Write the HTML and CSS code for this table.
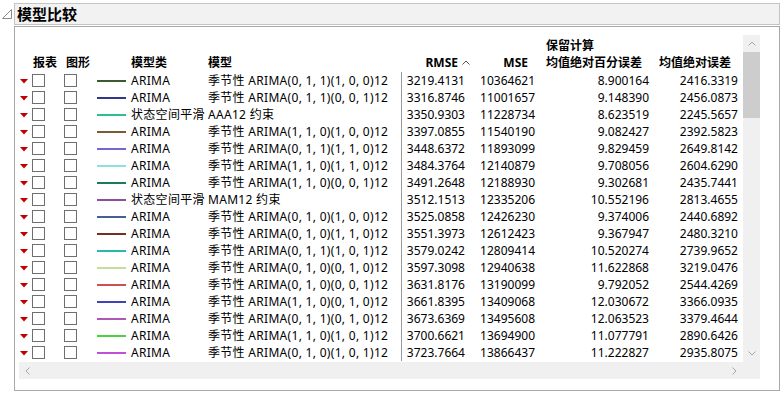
FILE: index.html
```html
<!DOCTYPE html>
<html lang="zh">
<head>
<meta charset="utf-8">
<link rel="stylesheet" href="styles.css">
</head>
<body>
<div class="outline">
  <div class="head">
    <span class="disc"><svg width="11" height="11" viewBox="0 0 11 11"><polygon points="9.5,0.5 9.5,9.5 0.5,9.5" fill="none" stroke="#8a8a8a" stroke-width="1"/></svg></span>
    <div class="titlebar">模型比较</div>
  </div>
  <div class="box">
    <div class="viewport">
      <div class="content">
        <table class="grid">
          <colgroup>
            <col class="w1"><col class="w2"><col class="w3"><col class="w4"><col class="w5"><col class="w6"><col class="w7"><col class="w8">
          </colgroup>
          <thead>
            <tr>
              <th class="h1">报表</th>
              <th class="h2">图形</th>
              <th class="h3">模型类</th>
              <th class="h4">模型</th>
              <th class="hn">RMSE<span class="sort"><svg width="8" height="5" viewBox="0 0 8 5"><polyline points="0.5,4.5 4,1 7.5,4.5" fill="none" stroke="#555" stroke-width="1"/></svg></span></th>
              <th class="hn">MSE<span class="sort"></span></th>
              <th class="hn"><span class="two">保留计算<br>均值绝对百分误差</span><span class="sort"></span></th>
              <th class="hn">均值绝对误差<span class="sort"></span></th>
            </tr>
          </thead>
          <tbody id="rows"></tbody>
        </table>
      </div>
      <div class="vbar">
        <div class="arr"><svg width="8" height="5" viewBox="0 0 8 5"><polyline points="0.5,4.5 4,1 7.5,4.5" fill="none" stroke="#a6a6a6" stroke-width="1"/></svg></div>
        <div class="thumb"></div>
        <div class="track"></div>
        <div class="arr"><svg width="8" height="5" viewBox="0 0 8 5"><polyline points="0.5,0.5 4,4 7.5,0.5" fill="none" stroke="#a6a6a6" stroke-width="1"/></svg></div>
      </div>
      <div class="hbar">
        <div class="arr"><svg width="5" height="8" viewBox="0 0 5 8"><polyline points="4.5,0.5 1,4 4.5,7.5" fill="none" stroke="#a6a6a6" stroke-width="1"/></svg></div>
        <div class="track"></div>
        <div class="arr"><svg width="5" height="8" viewBox="0 0 5 8"><polyline points="0.5,0.5 4,4 0.5,7.5" fill="none" stroke="#a6a6a6" stroke-width="1"/></svg></div>
        <div class="corner"></div>
      </div>
    </div>
  </div>
</div>
<script src="app.js"></script>
</body>
</html>
```
FILE: app.js
```js
var data = [
  ["#3c5a2e","ARIMA","季节性 ARIMA(0, 1, 1)(1, 0, 0)12","3219.4131","10364621","8.900164","2416.3319"],
  ["#2c3a8c","ARIMA","季节性 ARIMA(0, 1, 1)(0, 0, 1)12","3316.8746","11001657","9.148390","2456.0873"],
  ["#2fbf8e","状态空间平滑","AAA12 约束","3350.9303","11228734","8.623519","2245.5657"],
  ["#7b5b34","ARIMA","季节性 ARIMA(1, 1, 0)(1, 0, 0)12","3397.0855","11540190","9.082427","2392.5823"],
  ["#7468d0","ARIMA","季节性 ARIMA(0, 1, 1)(1, 1, 0)12","3448.6372","11893099","9.829459","2649.8142"],
  ["#8fe0e0","ARIMA","季节性 ARIMA(1, 1, 0)(1, 1, 0)12","3484.3764","12140879","9.708056","2604.6290"],
  ["#1e7a5e","ARIMA","季节性 ARIMA(1, 1, 0)(0, 0, 1)12","3491.2648","12188930","9.302681","2435.7441"],
  ["#8a4e9c","状态空间平滑","MAM12 约束","3512.1513","12335206","10.552196","2813.4655"],
  ["#465f95","ARIMA","季节性 ARIMA(0, 1, 0)(1, 0, 0)12","3525.0858","12426230","9.374006","2440.6892"],
  ["#6e3420","ARIMA","季节性 ARIMA(0, 1, 0)(1, 1, 0)12","3551.3973","12612423","9.367947","2480.3210"],
  ["#2ab8a8","ARIMA","季节性 ARIMA(0, 1, 1)(1, 0, 1)12","3579.0242","12809414","10.520274","2739.9652"],
  ["#c8dc9c","ARIMA","季节性 ARIMA(0, 1, 0)(0, 1, 0)12","3597.3098","12940638","11.622868","3219.0476"],
  ["#d05050","ARIMA","季节性 ARIMA(0, 1, 0)(0, 0, 1)12","3631.8176","13190099","9.792052","2544.4269"],
  ["#3c46b4","ARIMA","季节性 ARIMA(1, 1, 0)(0, 1, 0)12","3661.8395","13409068","12.030672","3366.0935"],
  ["#b056b4","ARIMA","季节性 ARIMA(0, 1, 1)(0, 1, 0)12","3673.6369","13495608","12.063523","3379.4644"],
  ["#50d040","ARIMA","季节性 ARIMA(1, 1, 0)(1, 0, 1)12","3700.6621","13694900","11.077791","2890.6426"],
  ["#c050dc","ARIMA","季节性 ARIMA(0, 1, 0)(1, 0, 1)12","3723.7664","13866437","11.222827","2935.8075"]
];
var tri = '<svg class="tri" width="8" height="5" viewBox="0 0 8 5"><polygon points="0,0 8,0 4,4.5" fill="#c00000"/></svg>';
var html = "";
data.forEach(function (r) {
  html += '<tr>' +
    '<td class="c1"><span class="cellflex">' + tri + '<span class="cb"></span></span></td>' +
    '<td class="c2"><span class="cellflex"><span class="cb"></span></span></td>' +
    '<td class="c3"><span class="cellflex"><span class="sw" style="background:' + r[0] + '"></span><span class="txt">' + r[1] + '</span></span></td>' +
    '<td class="c4">' + r[2] + '</td>' +
    '<td class="num sep">' + r[3] + '</td>' +
    '<td class="num">' + r[4] + '</td>' +
    '<td class="num">' + r[5] + '</td>' +
    '<td class="num">' + r[6] + '</td>' +
    '</tr>';
});
document.getElementById("rows").innerHTML = html;
```
FILE: styles.css
```css
html, body {
  margin: 0;
  padding: 0;
  background: #ffffff;
}
body {
  font-family: "Noto Sans", "Noto Sans CJK SC", sans-serif;
  font-size: 12px;
  color: #000;
  width: 782px;
  height: 395px;
  overflow: hidden;
}
.outline {
  padding-top: 3px;
}
.head {
  display: flex;
  align-items: flex-start;
}
.disc {
  width: 14px;
  height: 22px;
  display: flex;
  align-items: flex-start;
  padding-top: 6px;
  padding-left: 2px;
  box-sizing: border-box;
}
.disc svg { display: block; }
.titlebar {
  width: 766px;
  height: 22px;
  box-sizing: border-box;
  border: 1px solid #c4c4c4;
  background: #f2f2f2;
  padding-left: 2px;
  font-family: "Noto Sans CJK SC", sans-serif;
  font-weight: bold;
  font-size: 15px;
  line-height: 19px;
}
.box {
  margin-left: 14px;
  margin-top: 1px;
  width: 766px;
  height: 365px;
  box-sizing: border-box;
  border: 1px solid #a8a8a8;
  padding: 8px 19px 11px 4px;
  background: #fff;
}
.viewport {
  display: grid;
  grid-template-columns: 724px 17px;
  grid-template-rows: 327px 17px;
}
.content {
  overflow: hidden;
}
.grid {
  border-collapse: collapse;
  table-layout: fixed;
  width: 724px;
}
.w1 { width: 41px; }
.w2 { width: 33px; }
.w3 { width: 112px; }
.w4 { width: 196px; }
.w5 { width: 69px; }
.w6 { width: 70px; }
.w7 { width: 114px; }
.w8 { width: 89px; }
th {
  height: 36px;
  padding: 0 0 1px 0;
  vertical-align: bottom;
  font-weight: bold;
  line-height: 17px;
  white-space: nowrap;
  text-align: left;
}
.h1 { padding-left: 14px; }
.h2 { padding-left: 6px; }
.h3 { padding-left: 38px; }
.h4 { padding-left: 3px; }
.hn { text-align: right; }
.two {
  display: inline-block;
  text-align: left;
  vertical-align: bottom;
}
.sort {
  display: inline-block;
  width: 12px;
  height: 17px;
  vertical-align: bottom;
  position: relative;
}
.sort svg {
  position: absolute;
  right: 0;
  top: 6px;
}
td {
  height: 17px;
  padding: 0;
  line-height: 17px;
  white-space: nowrap;
  overflow: visible;
}
.cellflex {
  display: flex;
  align-items: center;
  height: 17px;
}
.c1 .cellflex { padding-left: 1px; }
.tri {
  display: block;
  margin-right: 4px;
  margin-top: 1px;
}
.cb {
  display: block;
  width: 13px;
  height: 13px;
  box-sizing: border-box;
  border: 1px solid #6f6f6f;
  background: #fff;
}
.c2 .cellflex { padding-left: 4px; }
.c3 .cellflex { padding-left: 4px; }
.sw {
  display: block;
  width: 29px;
  height: 2px;
  margin-right: 5px;
}
.txt { letter-spacing: 0.3px; }
.c4 {
  padding-left: 3px;
  letter-spacing: 0.3px;
}
.num {
  text-align: right;
  padding-right: 5px;
}
.sep {
  border-left: 1px solid #9a9a9a;
}
.vbar {
  background: #f0f0f0;
  display: flex;
  flex-direction: column;
}
.vbar .arr {
  height: 17px;
  display: flex;
  align-items: center;
  justify-content: center;
}
.thumb {
  height: 66px;
  background: #cdcdcd;
}
.vbar .track { flex: 1; }
.hbar {
  grid-column: 1 / span 2;
  background: #f0f0f0;
  display: flex;
}
.hbar .arr {
  width: 17px;
  display: flex;
  align-items: center;
  justify-content: center;
}
.hbar .track { flex: 1; }
.corner { width: 17px; }
```
